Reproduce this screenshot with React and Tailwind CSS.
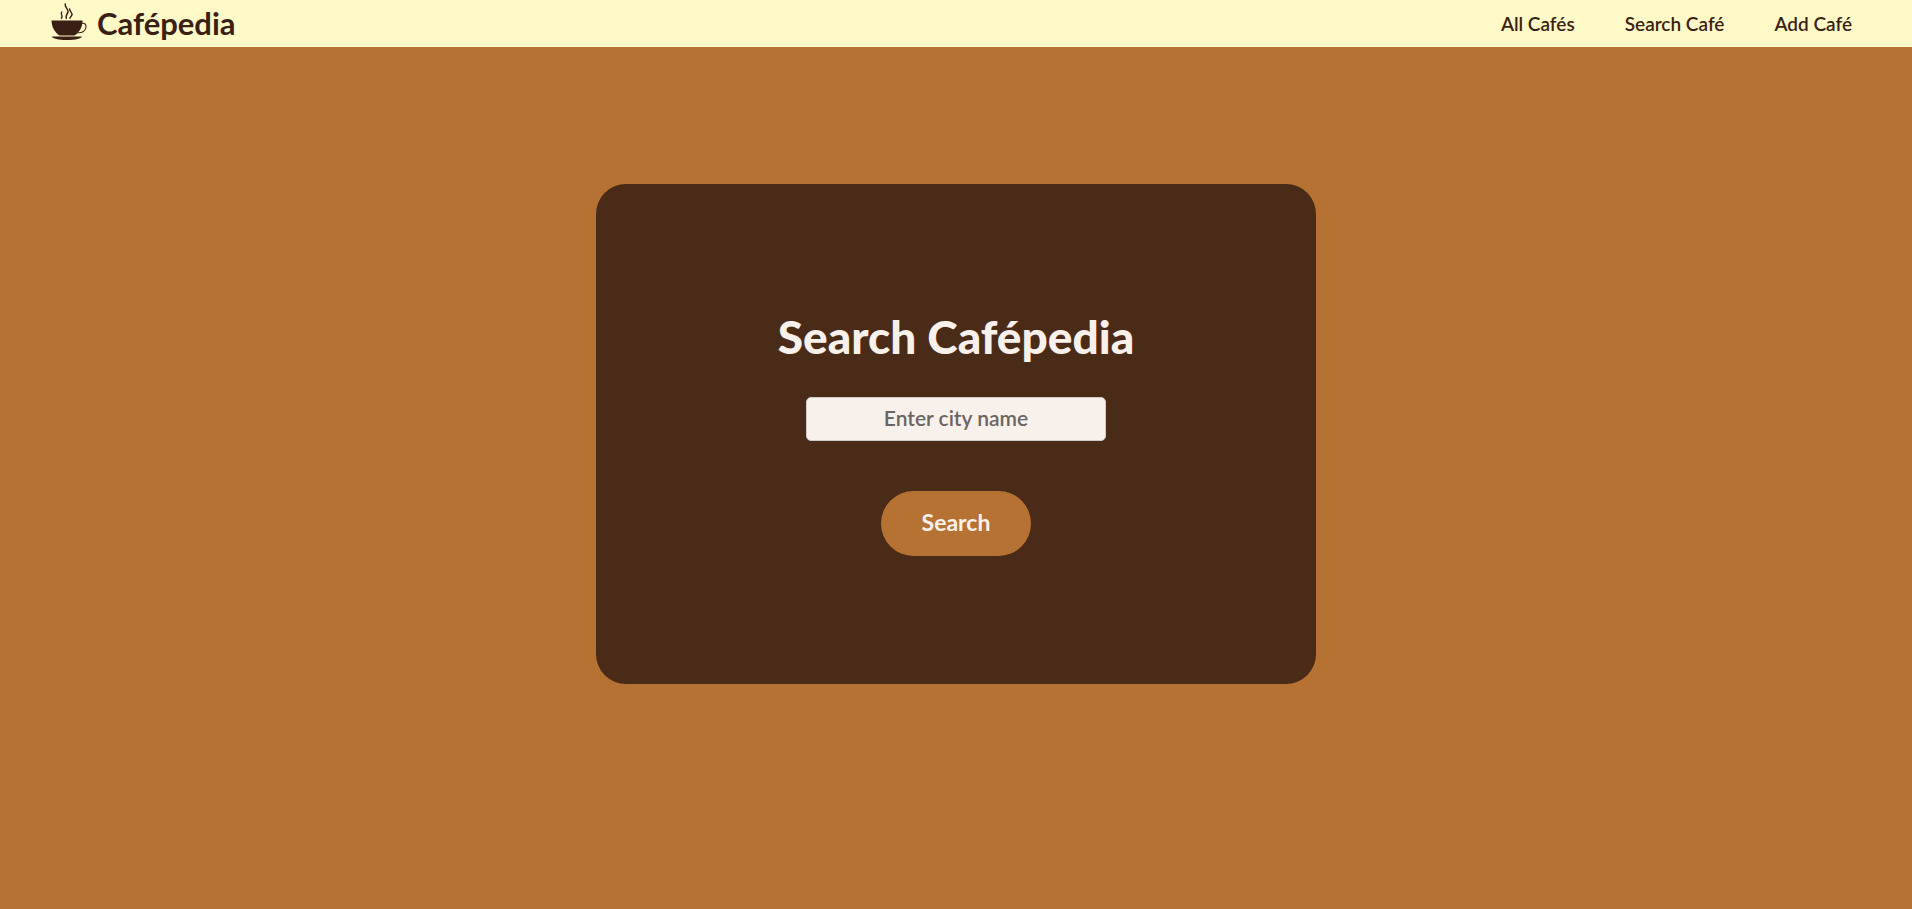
const links = ["All Cafés", "Search Café", "Add Café"];

function CupIcon() {
  return (
    <svg viewBox="0 0 36 38" className="h-[38px] w-9" fill="#3a1f14" aria-hidden="true">
      <path d="M0.5 17.5H31.5C31.5 24.5 28.5 29 23.5 32.5H8.5C3.5 29 0.8 24.5 0.5 17.5Z" />
      <path d="M0.5 33.5H31C30 35.7 25 37 16 37S2 35.7 0.5 33.5Z" />
      <g fill="none" stroke="#3a1f14" strokeLinecap="round">
        <path d="M30.5 20.5C33.5 19.5 35.5 21.5 35 24.5C34.3 28.3 30.5 30.2 26.5 29.7" strokeWidth="1.1" />
        <path d="M10.8 9C8.8 11 12.8 12.5 10.3 15.2" strokeWidth="1.3" />
        <path d="M14.3 1C13.2 4 17.8 6 17 9C16.5 11.2 14.3 12 15.3 15.2" strokeWidth="1.5" />
        <path d="M18.6 6C18.4 8.5 21.7 9.5 20.9 12C20.5 13.3 19.5 13.7 18.9 15.2" strokeWidth="1.4" />
      </g>
    </svg>
  );
}

export default function App() {
  return (
    <div className="flex min-h-screen flex-col bg-[#b67233] font-['Lato',sans-serif] text-[#3a1f14]">
      <header className="flex h-[47px] items-center justify-between bg-[#fff8c7] pr-[60px] pb-1 pl-[51px]">
        <a href="#" className="flex items-center gap-[10px]">
          <CupIcon />
          <span className="pt-0.5 text-[31px] leading-9 font-bold">Cafépedia</span>
        </a>
        <nav className="flex gap-[50px] pt-1">
          {links.map((label) => (
            <a key={label} href="#" className="text-[19px] leading-7 font-semibold">
              {label}
            </a>
          ))}
        </nav>
      </header>
      <main className="flex justify-center px-6 pt-[137px] pb-16">
        <form
          className="flex min-h-[500px] w-full max-w-[720px] flex-col items-center justify-center rounded-[30px] bg-[#4a2b18] pb-1 text-[#f8f0eb]"
          onSubmit={(e) => e.preventDefault()}
        >
          <h1 className="text-[46px] leading-14 font-black">Search Cafépedia</h1>
          <input
            type="text"
            aria-label="City name"
            placeholder="Enter city name"
            className="mt-8 h-11 w-[300px] rounded-[5px] border border-[#ccc] bg-[#f8f0eb] pb-0.5 text-center text-[21px] font-semibold text-[#3a1f14] placeholder:text-[#6b6562]"
          />
          <button
            type="submit"
            className="mt-[50px] h-[65px] w-[150px] rounded-full bg-[#b67233] pb-0.5 text-[23px] font-bold"
          >
            Search
          </button>
        </form>
      </main>
    </div>
  );
}
